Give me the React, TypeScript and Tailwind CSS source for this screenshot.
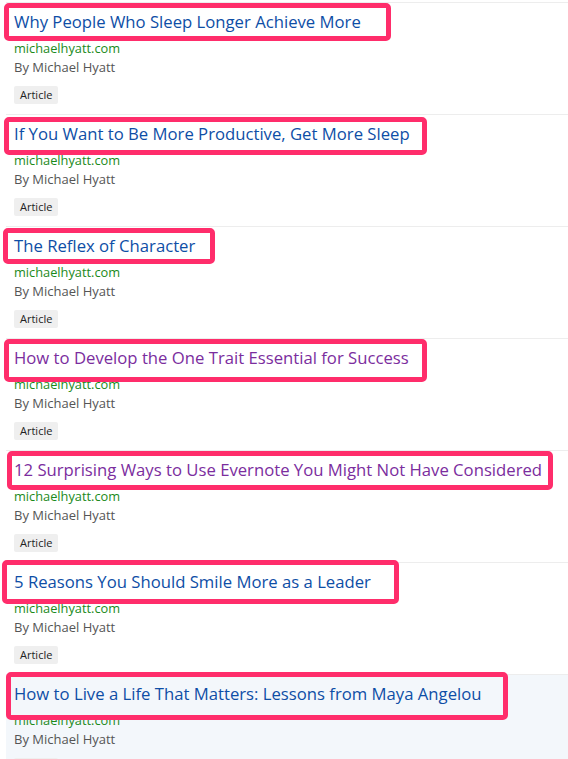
const results = [
  { title: 'Why People Who Sleep Longer Achieve More', visited: false },
  { title: 'If You Want to Be More Productive, Get More Sleep', visited: false },
  { title: 'The Reflex of Character', visited: false },
  { title: 'How to Develop the One Trait Essential for Success', visited: true },
  { title: '12 Surprising Ways to Use Evernote You Might Not Have Considered', visited: true },
  { title: '5 Reasons You Should Smile More as a Leader', visited: false },
  { title: 'How to Live a Life That Matters: Lessons from Maya Angelou', visited: false, active: true },
];

// highlight boxes drawn over the screenshot
const marks = [
  'left-[4px] top-[3px] w-[387px] h-[38px]',
  'left-[4px] top-[117px] w-[423px] h-[38px]',
  'left-[3px] top-[228px] w-[212px] h-[36px]',
  'left-[4px] top-[339px] w-[423px] h-[43px]',
  'left-[7px] top-[451px] w-[546px] h-[39px]',
  'left-[2px] top-[560px] w-[397px] h-[44px]',
  'left-[6px] top-[672px] w-[502px] h-[48px]',
];

const ResultRow = ({ title, visited, active }: { title: string; visited: boolean; active?: boolean }) => (
  <div className={`h-[112px] border-t border-[#ededed] pl-[8px] pt-[7px] ${active ? 'bg-[#f3f7fb]' : 'bg-white'}`}>
    <a
      href="#"
      className={`block whitespace-nowrap text-[16.7px] leading-[24px] ${visited ? 'text-[#7b2d9e]' : 'text-[#0e4ea6]'}`}
    >
      {title}
    </a>
    <div className="mt-[5px] text-[12.8px] leading-[18px] text-[#1b8a1b]">michaelhyatt.com</div>
    <div className="text-[13px] leading-[20px] text-[#555]">By Michael Hyatt</div>
    <span className="mt-[9px] inline-block h-[18px] rounded-[2px] bg-[#efefef] px-[6px] text-[11px] leading-[18px] text-[#222]">
      Article
    </span>
  </div>
);

export default function App() {
  return (
    <div
      className="relative h-[759px] w-[568px] overflow-hidden bg-white pt-[2px] pl-[6px]"
      style={{ fontFamily: '"Open Sans", "Noto Sans", sans-serif' }}
    >
      {results.map((r) => (
        <ResultRow key={r.title} {...r} />
      ))}
      {marks.map((m) => (
        <div key={m} className={`pointer-events-none absolute rounded-[5px] border-[5px] border-[#ff2d6b] ${m}`} />
      ))}
    </div>
  );
}
